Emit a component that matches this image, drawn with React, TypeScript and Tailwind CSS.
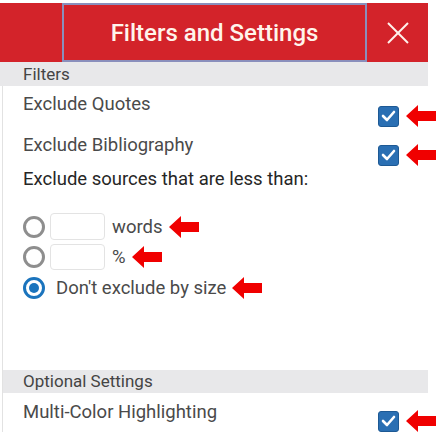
import React from "react";

const Arrow = () => (
  <svg width="30" height="22" viewBox="0 0 30 22" className="shrink-0">
    <polygon points="0,11 12,0 12,6 30,6 30,16 12,16 12,22" fill="#f00000" />
  </svg>
);

const Check = () => (
  <div className="w-[21px] h-[21px] rounded-[3px] bg-[#2a6fb3] border border-[#1d5994] flex items-center justify-center shrink-0">
    <svg width="15" height="12" viewBox="0 0 15 12">
      <polyline points="2,6 6,10 13,2" fill="none" stroke="#ffffff" strokeWidth="2.6" strokeLinecap="round" strokeLinejoin="round" />
    </svg>
  </div>
);

const Radio = ({ on }: { on?: boolean }) =>
  on ? (
    <div className="w-[22px] h-[22px] rounded-full border-[3px] border-[#1b74bd] flex items-center justify-center shrink-0">
      <div className="w-[10px] h-[10px] rounded-full bg-[#1b74bd]" />
    </div>
  ) : (
    <div className="w-[22px] h-[22px] rounded-full border-[3px] border-[#8e8e8e] bg-white shrink-0" />
  );

const CheckGroup = () => (
  <div className="flex items-center gap-[7px] self-end">
    <Check />
    <Arrow />
  </div>
);

export default function App() {
  return (
    <div
      className="w-[438px] h-[438px] bg-white overflow-hidden pt-[3px]"
      style={{ fontFamily: "Roboto, 'Noto Sans', sans-serif" }}
    >
      <div className="w-[428px] h-[59px] bg-[#d3232a] flex">
        <div className="w-[62px]" />
        <div className="w-[305px] border-2 border-[#8a8fbc] flex items-center justify-center">
          <span className="text-[24px] font-medium text-[#fff4ec] leading-none">Filters and Settings</span>
        </div>
        <div className="flex-1 flex items-center justify-center">
          <svg width="24" height="22" viewBox="0 0 24 22">
            <line x1="2" y1="1" x2="22" y2="21" stroke="#fff4ec" strokeWidth="2" />
            <line x1="22" y1="1" x2="2" y2="21" stroke="#fff4ec" strokeWidth="2" />
          </svg>
        </div>
      </div>
      <div className="flex flex-col">
        <div className="w-[428px] h-[24px] bg-[#e8e8ea] pl-[23px] text-[17px] leading-[24px] text-[#444]">Filters</div>
        <div className="ml-[2px] border-l border-[#e2e2e2] pr-[2px] flex flex-col">
          <div className="h-[41px] flex justify-between pl-[20px]">
            <span className="mt-[8px] text-[18.5px] leading-[20px] text-[#4a4a4a]">Exclude Quotes</span>
            <CheckGroup />
          </div>
          <div className="h-[40px] flex justify-between pl-[20px]">
            <span className="mt-[8px] text-[18.5px] leading-[20px] text-[#4a4a4a]">Exclude Bibliography</span>
            <div className="mb-[1px] self-end flex">
              <CheckGroup />
            </div>
          </div>
          <div className="mt-[2px] pl-[20px] text-[18.5px] leading-[20px] text-[#262626]">Exclude sources that are less than:</div>
          <div className="mt-[24px] h-[27px] flex items-center pl-[20px]">
            <Radio />
            <div className="ml-[5px] w-[55px] h-[27px] border border-[#e3e3e3] rounded-[4px]" />
            <span className="ml-[7px] text-[18.5px] leading-[20px] text-[#4a4a4a]">words</span>
            <span className="ml-[6px] flex"><Arrow /></span>
          </div>
          <div className="mt-[4px] h-[26px] flex items-center pl-[20px]">
            <Radio />
            <div className="ml-[5px] w-[55px] h-[26px] border border-[#e3e3e3] rounded-[4px]" />
            <span className="ml-[7px] text-[18.5px] leading-[20px] text-[#4a4a4a]">%</span>
            <span className="ml-[6px] flex"><Arrow /></span>
          </div>
          <div className="mt-[6px] h-[24px] flex items-center pl-[20px]">
            <Radio on />
            <span className="ml-[11px] text-[18.5px] leading-[20px] text-[#4a4a4a]">Don't exclude by size</span>
            <span className="ml-[6px] flex"><Arrow /></span>
          </div>
          <div className="mt-[70px] w-[425px] h-[23px] bg-[#e8e8ea] pl-[20px] text-[17px] leading-[23px] text-[#444]">Optional Settings</div>
          <div className="h-[39px] flex justify-between pl-[20px]">
            <span className="mt-[9px] text-[18.5px] leading-[20px] text-[#4a4a4a]">Multi-Color Highlighting</span>
            <CheckGroup />
          </div>
        </div>
      </div>
    </div>
  );
}
